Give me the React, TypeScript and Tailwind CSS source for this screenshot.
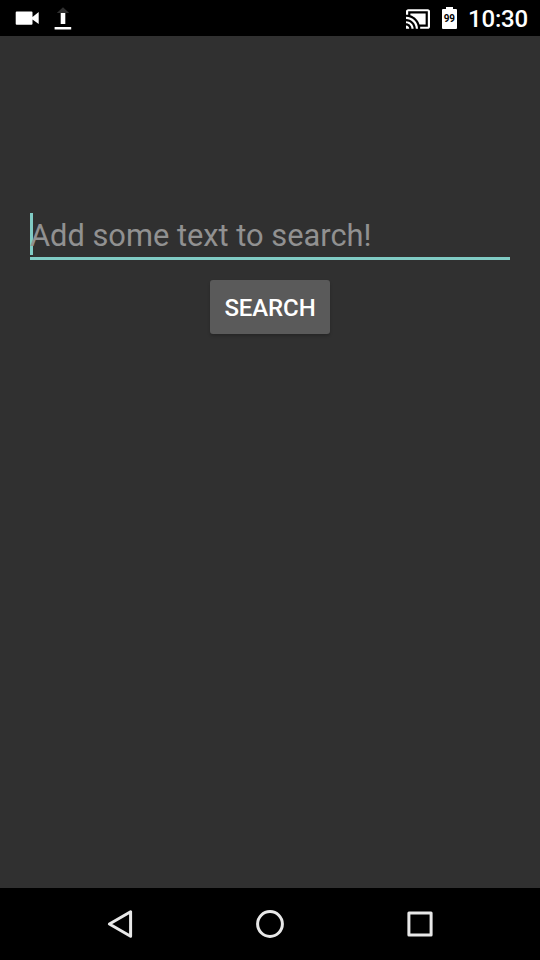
import React from 'react';

function CameraIcon() {
  return (
    <svg className="h-5 w-6" viewBox="0 0 24 20" fill="#fff">
      <path d="M2 3.5h14.5a1 1 0 0 1 1 1v4.4L23.7 4v12l-6.2-4.6v4.4a1 1 0 0 1-1 1H1.7a1 1 0 0 1-1-1V4.5a1 1 0 0 1 1-1Z" />
    </svg>
  );
}

function UploadIcon() {
  return (
    <svg className="h-6 w-[18px]" viewBox="0 0 18 24">
      <path d="M9 1.2 15.2 7h-3.5v11H6.3V7H2.8Z" fill="#303030" />
      <path d="M6.8 7h4.4v11H6.8ZM.6 21h16.6v2.4H.6Z" fill="#fff" />
    </svg>
  );
}

function CastIcon() {
  return (
    <svg className="h-5 w-6" viewBox="1 3 22 18" fill="#fff">
      <path d="M1 18v3h3c0-1.66-1.34-3-3-3zm0-4v2c2.76 0 5 2.24 5 5h2c0-3.87-3.13-7-7-7zm18-7H5v1.63c3.96 1.28 7.09 4.41 8.37 8.37H19V7zM1 10v2c4.97 0 9 4.03 9 9h2c0-6.08-4.93-11-11-11zm20-7H3c-1.1 0-2 .9-2 2v3h2V5h18v14h-7v2h7c1.1 0 2-.9 2-2V5c0-1.1-.9-2-2-2z" />
    </svg>
  );
}

function Battery() {
  return (
    <div className="flex w-[15px] flex-col items-center">
      <div className="h-[2px] w-[7px] bg-white" />
      <div className="flex h-5 w-[15px] items-center justify-center rounded-[1px] bg-white pb-px">
        <span className="scale-x-90 text-[11px] leading-none font-bold text-black">99</span>
      </div>
    </div>
  );
}

function StatusBar() {
  return (
    <header className="flex h-9 items-start justify-between bg-black pr-[12px] pl-[15px] text-white">
      <div className="flex items-start">
        <div className="pt-2">
          <CameraIcon />
        </div>
        <div className="ml-[15px] pt-[6px]">
          <UploadIcon />
        </div>
      </div>
      <div className="flex items-start">
        <div className="pt-[9px]">
          <CastIcon />
        </div>
        <div className="ml-3 pt-[7px]">
          <Battery />
        </div>
        <span className="ml-[11px] w-[60px] pt-[5px] text-[24px] leading-[28px] font-medium tracking-[-0.2px] whitespace-nowrap">10:30</span>
      </div>
    </header>
  );
}

function NavigationBar() {
  return (
    <nav className="flex h-[72px] items-center justify-center gap-[110px] bg-black">
      <svg className="h-10 w-10" viewBox="0 0 40 40" fill="none" stroke="#e8e8e8" strokeWidth="3" strokeLinejoin="round">
        <path d="M30.6 7.7v24.6L9.4 20Z" />
      </svg>
      <svg className="h-10 w-10" viewBox="0 0 40 40" fill="none" stroke="#e8e8e8" strokeWidth="3">
        <circle cx="20" cy="20" r="12.4" />
      </svg>
      <svg className="h-10 w-10" viewBox="0 0 40 40" fill="none" stroke="#e8e8e8" strokeWidth="3" strokeLinejoin="round">
        <path d="M8.9 8.9h22.2v22.2H8.9Z" />
      </svg>
    </nav>
  );
}

export default function App() {
  return (
    <div className="flex h-[960px] w-[540px] flex-col overflow-hidden bg-[#303030] font-[Roboto,sans-serif]">
      <StatusBar />
      <main className="flex flex-1 flex-col items-center px-[30px] pt-[177px]">
        <div className="flex h-[47px] w-full border-b-[3px] border-[#80cbc4]">
          <div className="h-[42px] w-[3px] bg-[#80cbc4]" />
          <span className="-ml-[3px] pt-[5px] text-[30.8px] leading-[36px] whitespace-nowrap text-[#919191]">
            Add some text to search!
          </span>
        </div>
        <button className="mt-5 flex h-[54px] w-[120px] items-center justify-center rounded-[3px] bg-[#5a5a5a] pt-px text-[24px] leading-none font-medium tracking-[-0.1px] text-white shadow-[0_2px_3px_rgba(0,0,0,0.2)]">
          SEARCH
        </button>
      </main>
      <NavigationBar />
    </div>
  );
}
